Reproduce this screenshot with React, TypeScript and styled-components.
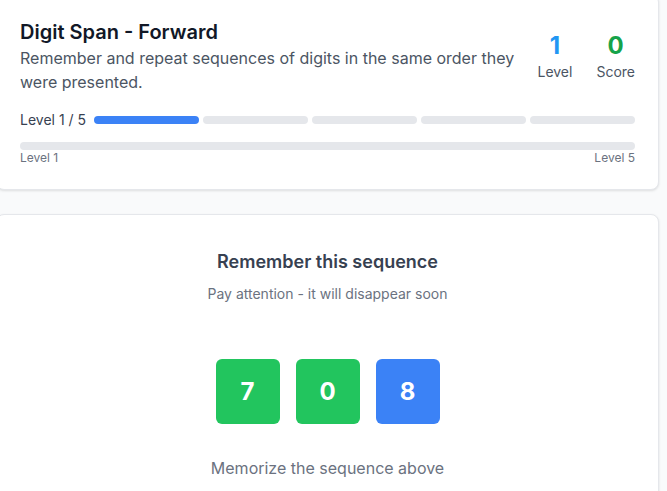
import React from 'react';
import styled, { createGlobalStyle } from 'styled-components';

const GlobalStyle = createGlobalStyle`
  html, body {
    margin: 0;
    padding: 0;
    background: #f9fafb;
    font-family: Inter, "Noto Sans", "Liberation Sans", sans-serif;
    overflow: hidden;
  }
  * { box-sizing: border-box; }
`;

const Page = styled.div`
  display: flex;
  flex-direction: column;
  gap: 24px;
  margin: -6px 8px 0 -4px;
`;

const Card = styled.section`
  background: #fff;
  border: 1px solid #e5e7eb;
  border-radius: 8px;
  box-shadow: 0 1px 3px rgba(0, 0, 0, 0.08), 0 1px 2px rgba(0, 0, 0, 0.04);
  padding: ${(p: { $pad?: string }) => p.$pad || '23px'};
`;

const Header = styled.div`
  display: flex;
  justify-content: space-between;
  align-items: center;
  gap: 16px;
`;

const Intro = styled.div`
  flex: 1;
  max-width: 500px;
`;

const Title = styled.h1`
  margin: 0;
  font-size: 20px;
  line-height: 28px;
  font-weight: 600;
  color: #111827;
`;

const Description = styled.p`
  margin: 0;
  font-size: 16px;
  line-height: 24px;
  color: #4b5563;
`;

const Stats = styled.div`
  display: flex;
  gap: 24px;
`;

const Stat = styled.div`
  display: flex;
  flex-direction: column;
  align-items: center;
`;

const StatValue = styled.div<{ $color: string }>`
  font-size: 24px;
  line-height: 32px;
  font-weight: 700;
  color: ${(p) => p.$color};
`;

const StatLabel = styled.div`
  font-size: 14px;
  line-height: 20px;
  color: #4b5563;
`;

const LevelRow = styled.div`
  display: flex;
  align-items: center;
  gap: 8px;
  margin-top: 16px;
`;

const LevelText = styled.span`
  font-size: 14px;
  line-height: 20px;
  font-weight: 400;
  color: #374151;
  white-space: nowrap;
`;

const Segments = styled.div`
  flex: 1;
  display: flex;
  gap: 4px;
`;

const Segment = styled.div<{ $on: boolean }>`
  flex: 1;
  height: 8px;
  border-radius: 9999px;
  background: ${(p) => (p.$on ? '#3b82f6' : '#e5e7eb')};
`;

const Track = styled.div`
  margin-top: 12px;
  height: 8px;
  border-radius: 9999px;
  background: #e5e7eb;
  overflow: hidden;
`;

const Fill = styled.div`
  height: 100%;
  background: #3b82f6;
  border-radius: 9999px;
`;

const TrackLabels = styled.div`
  display: flex;
  justify-content: space-between;
  font-size: 12px;
  line-height: 16px;
  color: #6b7280;
`;

const Center = styled.div`
  display: flex;
  flex-direction: column;
  align-items: center;
  text-align: center;
`;

const Heading = styled.h2`
  margin: 0;
  font-size: 18px;
  line-height: 28px;
  font-weight: 600;
  color: #374151;
`;

const Sub = styled.p`
  margin: 8px 0 0;
  font-size: 14px;
  line-height: 20px;
  color: #6b7280;
`;

const Digits = styled.div`
  display: flex;
  gap: 16px;
  margin-top: 55px;
`;

const DigitBox = styled.div<{ $color: string }>`
  width: 64px;
  height: 65px;
  border-radius: 6px;
  background: ${(p) => p.$color};
  color: #fff;
  font-size: 24px;
  font-weight: 700;
  display: flex;
  align-items: center;
  justify-content: center;
`;

const Hint = styled.p`
  margin: 32px 0 0;
  font-size: 16px;
  line-height: 24px;
  color: #6b7280;
`;

const level = 1;
const total = 5;
const sequence = [
  { d: 7, color: '#22c55e' },
  { d: 0, color: '#22c55e' },
  { d: 8, color: '#3b82f6' },
];

export default function App() {
  return (
    <>
      <GlobalStyle />
      <Page>
        <Card>
          <Header>
            <Intro>
              <Title>Digit Span - Forward</Title>
              <Description>
                Remember and repeat sequences of digits in the same order they were presented.
              </Description>
            </Intro>
            <Stats>
              <Stat>
                <StatValue $color="#2196f3">{level}</StatValue>
                <StatLabel>Level</StatLabel>
              </Stat>
              <Stat>
                <StatValue $color="#16a34a">0</StatValue>
                <StatLabel>Score</StatLabel>
              </Stat>
            </Stats>
          </Header>
          <LevelRow>
            <LevelText>
              Level {level} / {total}
            </LevelText>
            <Segments>
              {Array.from({ length: total }).map((_, i) => (
                <Segment key={i} $on={i < level} />
              ))}
            </Segments>
          </LevelRow>
          <Track>
            <Fill style={{ width: `${((level - 1) / (total - 1)) * 100}%` }} />
          </Track>
          <TrackLabels>
            <span>Level 1</span>
            <span>Level {total}</span>
          </TrackLabels>
        </Card>
        <Card $pad="33px 23px 40px">
          <Center>
            <Heading>Remember this sequence</Heading>
            <Sub>Pay attention - it will disappear soon</Sub>
            <Digits>
              {sequence.map((s, i) => (
                <DigitBox key={i} $color={s.color}>
                  {s.d}
                </DigitBox>
              ))}
            </Digits>
            <Hint>Memorize the sequence above</Hint>
          </Center>
        </Card>
      </Page>
    </>
  );
}
